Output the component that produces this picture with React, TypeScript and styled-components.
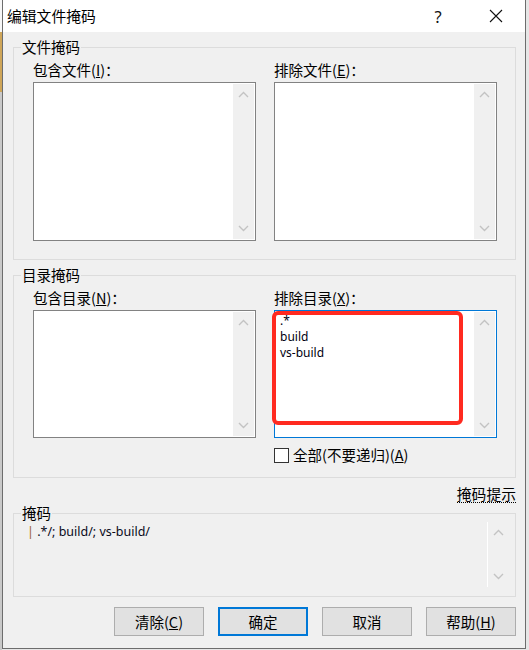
import React from "react";
import styled, { createGlobalStyle } from "styled-components";

const GlobalStyle = createGlobalStyle`
  html, body { margin: 0; padding: 0; }
  body {
    width: 529px;
    height: 650px;
    overflow: hidden;
    background: #e6e6e6;
    font-family: "Noto Sans CJK SC", "Noto Sans", sans-serif;
    color: #000;
  }
  #root { width: 529px; height: 650px; }
  * { box-sizing: border-box; }
`;

const Screen = styled.div`
  display: flex;
  width: 529px;
  height: 650px;
  background: #e6e6e6;
`;

const BackEdge = styled.div`
  flex: none;
  width: 2px;
  background: linear-gradient(
    to bottom,
    #f7f7f7 0,
    #f7f7f7 32px,
    #cfa659 32px,
    #cfa659 92px,
    #c9c9c9 92px,
    #c9c9c9 100%
  );
`;

const Dialog = styled.div`
  flex: none;
  width: 524px;
  height: 649px;
  border: 1px solid #6d6d6d;
  border-top: none;
  display: flex;
  flex-direction: column;
  background: #f0f0f0;
`;

const TitleBar = styled.div`
  flex: none;
  height: 32px;
  background: #fff;
  display: flex;
  align-items: center;
  padding: 0 6px 0 4px;
  gap: 12px;
`;

const Title = styled.div`
  flex: 1;
  font-size: 14.8px;
  line-height: 18px;
`;

const TitleButton = styled.div`
  width: 46px;
  height: 32px;
  display: flex;
  align-items: center;
  justify-content: center;
  font-family: "Noto Sans", sans-serif;
  font-size: 16.5px;
  font-weight: 400;
  color: #111;
`;

const Body = styled.div`
  flex: 1;
  display: flex;
  flex-direction: column;
  padding: 6px 9px 0 10px;
`;

const Group = styled.fieldset<{ $gap?: number }>`
  margin: ${(p) => p.$gap ?? 0}px 0 0 0;
  min-width: 0;
  padding: 0;
  border: 1px solid #dcdcdc;
`;

const Legend = styled.legend`
  margin-left: 7px;
  padding: 0 1px;
  font-size: 14.5px;
  line-height: 18px;
`;

const PairGrid = styled.div<{ $bottom: number }>`
  display: grid;
  grid-template-columns: 223px 223px;
  column-gap: 18px;
  padding: 5px 18px ${(p) => p.$bottom}px 19px;
`;

const Column = styled.div`
  display: flex;
  flex-direction: column;
`;

const FieldLabel = styled.div`
  font-size: 14.5px;
  line-height: 18px;
  margin-bottom: 3px;
  white-space: nowrap;
`;

const ListBox = styled.div<{ $h: number; $focused?: boolean }>`
  position: relative;
  height: ${(p) => p.$h}px;
  border: 1px solid ${(p) => (p.$focused ? "#0078d7" : "#828282")};
  background: #fff;
  padding: 1px;
  display: flex;
`;

const ListItems = styled.div`
  flex: 1;
  padding: 1px 0 0 4px;
  font-family: "Noto Sans", "Liberation Sans", sans-serif;
  font-size: 12px;
  line-height: 16px;
  color: #000010;
`;

const ScrollTrack = styled.div<{ $line?: boolean }>`
  flex: none;
  width: 21px;
  background: #f0f0f0;
  display: flex;
  flex-direction: column;
  justify-content: space-between;
  align-items: center;
  padding: 7px 0;
  border-left: ${(p) => (p.$line ? "1px solid #ffffff" : "none")};
`;

const Annotation = styled.div`
  position: absolute;
  left: -3px;
  top: 0;
  width: 191px;
  height: 114px;
  border: 4px solid #ff2a20;
  border-radius: 6px;
  pointer-events: none;
`;

const CheckRow = styled.div`
  display: flex;
  align-items: center;
  gap: 4px;
  margin-top: 8px;
  height: 18px;
  font-size: 14.5px;
  line-height: 18px;
`;

const CheckBox = styled.div`
  width: 15px;
  height: 15px;
  border: 1px solid #333;
  background: #fff;
`;

const HintRow = styled.div`
  display: flex;
  justify-content: flex-end;
  margin-top: 8px;
`;

const Hint = styled.span`
  font-size: 14.8px;
  line-height: 16px;
  border-bottom: 1px dotted #000;
`;

const MaskArea = styled.div`
  display: flex;
  height: 65px;
  margin: 0 7px 9px 0;
`;

const MaskText = styled.div`
  flex: 1;
  padding: 2px 0 0 13px;
  font-family: "Noto Sans", "Liberation Sans", sans-serif;
  font-size: 12.5px;
  line-height: 16px;
  color: #0a0a1a;
  white-space: pre;
`;

const Caret = styled.span`
  color: #9a6230;
`;

const ButtonRow = styled.div`
  display: flex;
  justify-content: flex-end;
  gap: 14px;
  margin-top: 10px;
`;

const Button = styled.div<{ $default?: boolean }>`
  width: 90px;
  height: 29px;
  display: flex;
  align-items: center;
  justify-content: center;
  background: #e1e1e1;
  border: ${(p) => (p.$default ? "2px solid #0078d7" : "1px solid #adadad")};
  font-size: 14.5px;
  line-height: 18px;
`;

const Chevron = ({ up }: { up?: boolean }) => (
  <svg width="11" height="7" viewBox="0 0 11 7">
    <path
      d={up ? "M1 6 L5.5 1.5 L10 6" : "M1 1 L5.5 5.5 L10 1"}
      fill="none"
      stroke="#c3c3c3"
      strokeWidth="1.4"
    />
  </svg>
);

const Scroll = ({ line }: { line?: boolean }) => (
  <ScrollTrack $line={line}>
    <Chevron up />
    <Chevron />
  </ScrollTrack>
);

const CloseIcon = () => (
  <svg width="14" height="14" viewBox="0 0 14 14">
    <path d="M1 1 L13 13 M13 1 L1 13" stroke="#111" strokeWidth="1.1" fill="none" />
  </svg>
);

export default function App() {
  return (
    <>
      <GlobalStyle />
      <Screen>
        <BackEdge />
        <Dialog>
          <TitleBar>
            <Title>编辑文件掩码</Title>
            <TitleButton>?</TitleButton>
            <TitleButton>
              <CloseIcon />
            </TitleButton>
          </TitleBar>
          <Body>
            <Group>
              <Legend>文件掩码</Legend>
              <PairGrid $bottom={18}>
                <Column>
                  <FieldLabel>
                    包含文件(<u>I</u>)：
                  </FieldLabel>
                  <ListBox $h={159}>
                    <ListItems />
                    <Scroll />
                  </ListBox>
                </Column>
                <Column>
                  <FieldLabel>
                    排除文件(<u>E</u>)：
                  </FieldLabel>
                  <ListBox $h={159}>
                    <ListItems />
                    <Scroll />
                  </ListBox>
                </Column>
              </PairGrid>
            </Group>

            <Group $gap={6}>
              <Legend>目录掩码</Legend>
              <PairGrid $bottom={13}>
                <Column>
                  <FieldLabel>
                    包含目录(<u>N</u>)：
                  </FieldLabel>
                  <ListBox $h={128}>
                    <ListItems />
                    <Scroll />
                  </ListBox>
                </Column>
                <Column>
                  <FieldLabel>
                    排除目录(<u>X</u>)：
                  </FieldLabel>
                  <ListBox $h={128} $focused>
                    <ListItems>
                      <div>.*</div>
                      <div>build</div>
                      <div>vs-build</div>
                    </ListItems>
                    <Scroll />
                    <Annotation />
                  </ListBox>
                  <CheckRow>
                    <CheckBox />
                    <span>
                      全部(不要递归)(<u>A</u>)
                    </span>
                  </CheckRow>
                </Column>
              </PairGrid>
            </Group>

            <HintRow>
              <Hint>掩码提示</Hint>
            </HintRow>

            <Group $gap={1}>
              <Legend>掩码</Legend>
              <MaskArea>
                <MaskText>
                  <Caret>|</Caret> .*/; build/; vs-build/
                </MaskText>
                <Scroll line />
              </MaskArea>
            </Group>

            <ButtonRow>
              <Button>
                清除(<u>C</u>)
              </Button>
              <Button $default>确定</Button>
              <Button>取消</Button>
              <Button>
                帮助(<u>H</u>)
              </Button>
            </ButtonRow>
          </Body>
        </Dialog>
      </Screen>
    </>
  );
}
